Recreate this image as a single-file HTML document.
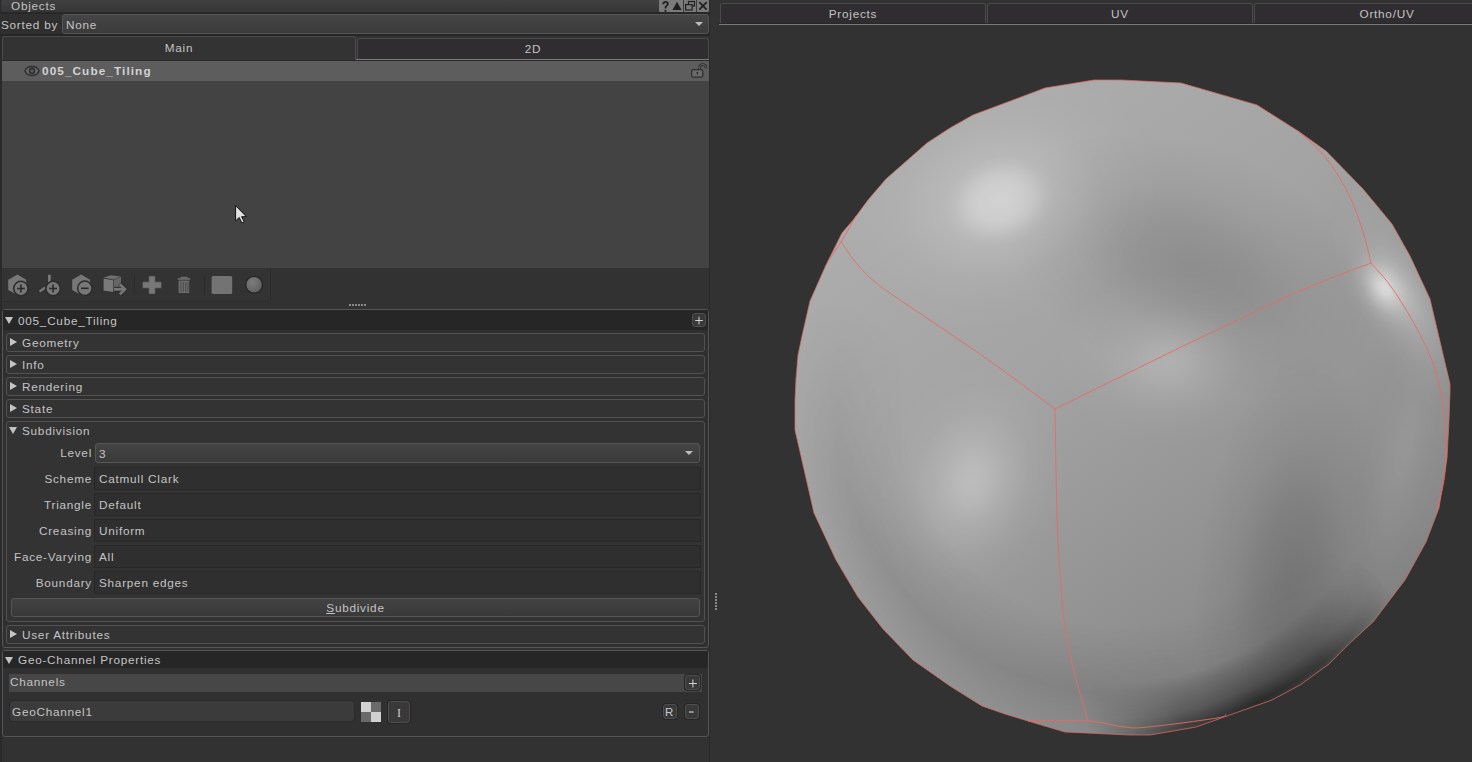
<!DOCTYPE html>
<html><head><meta charset="utf-8">
<style>
*{box-sizing:border-box;margin:0;padding:0}
html,body{width:1472px;height:762px;overflow:hidden;background:#323232}
body{position:relative;font-family:"Liberation Sans",sans-serif;font-size:11.75px;letter-spacing:0.75px;color:#c4c4c4}
.a{position:absolute}
.t{position:absolute;white-space:nowrap;line-height:14px}
.grp{position:absolute;left:6px;width:699px;height:19px;border:1px solid #525252;border-radius:3px;background:#333}
.tri-r{position:absolute;width:0;height:0;border-top:4px solid transparent;border-bottom:4px solid transparent;border-left:7px solid #c4c4c4}
.tri-d{position:absolute;width:0;height:0;border-left:4px solid transparent;border-right:4px solid transparent;border-top:7px solid #c4c4c4}
.fld{position:absolute;left:94px;width:607px;height:23px;background:#2f2f2f;border:1px solid #272727;border-radius:1px}
.lbl{position:absolute;right:1380px;text-align:right}
.btn{position:absolute;border:1px solid #4e4e4e;border-radius:3px;background:#393939;box-shadow:0 0 0 1px #262626}
</style></head><body>

<!-- left strip -->
<div class="a" style="left:0;top:0;width:2px;height:762px;background:#2a2a2a"></div>
<!-- title bar -->
<div class="a" style="left:1px;top:0;width:708px;height:12px;background:linear-gradient(#404040,#363636);border-radius:2px 0 0 0"></div>
<div class="a" style="left:0;top:12px;width:710px;height:2px;background:#282828"></div>
<div class="t" style="left:11px;top:-1px">Objects</div>
<div class="a" style="left:659px;top:0;width:50px;height:12px;background:#7a7a7a;border-radius:0 0 2px 2px"></div>

<!-- sorted by -->
<div class="a" style="left:0;top:14px;width:710px;height:22px;background:#2f2f2f"></div>
<div class="t" style="left:1px;top:18px">Sorted by</div>
<div class="a" style="left:62px;top:14px;width:647px;height:20px;border:1px solid #555;border-radius:3px;background:linear-gradient(#454545,#3b3b3b)"></div>
<div class="t" style="left:66px;top:18px">None</div>
<div class="a" style="left:695px;top:22px;width:0;height:0;border-left:4px solid transparent;border-right:4px solid transparent;border-top:4px solid #bdbdbd"></div>
<div class="a" style="left:0;top:34px;width:710px;height:2px;background:#262626"></div>

<!-- tabs -->
<div class="a" style="left:2px;top:36px;width:354px;height:25px;border:1px solid #4a4a4a;border-bottom:none;border-radius:3px 3px 0 0;background:#333"></div>
<div class="t" style="left:2px;top:41px;width:354px;text-align:center">Main</div>
<div class="a" style="left:357px;top:38px;width:352px;height:22px;border:1px solid #4a4a4a;border-bottom:none;border-radius:3px 3px 0 0;background:#2f2d2f"></div>
<div class="t" style="left:357px;top:42px;width:352px;text-align:center">2D</div>
<div class="a" style="left:356px;top:59px;width:354px;height:1px;background:#7a7a7a"></div>

<!-- object list -->
<div class="a" style="left:2px;top:60px;width:707px;height:208px;background:#434343"></div>
<div class="a" style="left:2px;top:60px;width:707px;height:1px;background:#282828"></div>
<div class="a" style="left:2px;top:61px;width:707px;height:20px;background:#5d5d5d"></div>
<div class="t" style="left:42px;top:64px;font-weight:bold;color:#d2d2d2;letter-spacing:1.1px">005_Cube_Tiling</div>

<!-- toolbar -->
<div class="a" style="left:2px;top:268px;width:269px;height:34px;background:#333;border-right:1px solid #2c2c2c;border-bottom:1px solid #2c2c2c"></div>

<!-- splitter dots -->
<div class="a" style="left:349px;top:304px;width:18px;height:2px;background:repeating-linear-gradient(90deg,#8a8a8a 0 2px,transparent 2px 3px)"></div>

<!-- properties frame -->
<div class="a" style="left:2px;top:309px;width:707px;height:339px;border:1px solid #555;border-radius:3px;background:#303030"></div>
<div class="a" style="left:3px;top:310px;width:705px;height:20px;background:#262626"></div>
<div class="tri-d" style="left:5px;top:317px"></div>
<div class="t" style="left:18px;top:314px">005_Cube_Tiling</div>
<div class="btn" style="left:692px;top:313px;width:14px;height:14px"></div>

<div class="grp" style="top:333px"></div>
<div class="tri-r" style="left:10px;top:338px"></div>
<div class="t" style="left:22px;top:336px">Geometry</div>
<div class="grp" style="top:355px"></div>
<div class="tri-r" style="left:10px;top:360px"></div>
<div class="t" style="left:22px;top:358px">Info</div>
<div class="grp" style="top:377px"></div>
<div class="tri-r" style="left:10px;top:382px"></div>
<div class="t" style="left:22px;top:380px">Rendering</div>
<div class="grp" style="top:399px"></div>
<div class="tri-r" style="left:10px;top:404px"></div>
<div class="t" style="left:22px;top:402px">State</div>

<div class="grp" style="top:421px;height:201px"></div>
<div class="tri-d" style="left:9px;top:427px"></div>
<div class="t" style="left:22px;top:424px">Subdivision</div>

<div class="a" style="left:95px;top:443px;width:605px;height:20px;border:1px solid #555;border-radius:3px;background:linear-gradient(#444,#3a3a3a)"></div>
<div class="t" style="left:99px;top:447px">3</div>
<div class="lbl t" style="top:446px">Level</div>
<div class="a" style="left:685px;top:451px;width:0;height:0;border-left:4px solid transparent;border-right:4px solid transparent;border-top:4px solid #bdbdbd"></div>

<div class="fld" style="top:467px"></div><div class="t" style="left:99px;top:472px">Catmull Clark</div><div class="lbl t" style="top:472px">Scheme</div>
<div class="fld" style="top:493px"></div><div class="t" style="left:99px;top:498px">Default</div><div class="lbl t" style="top:498px">Triangle</div>
<div class="fld" style="top:519px"></div><div class="t" style="left:99px;top:524px">Uniform</div><div class="lbl t" style="top:524px">Creasing</div>
<div class="fld" style="top:545px"></div><div class="t" style="left:99px;top:550px">All</div><div class="lbl t" style="top:550px">Face-Varying</div>
<div class="fld" style="top:571px"></div><div class="t" style="left:99px;top:576px">Sharpen edges</div><div class="lbl t" style="top:576px">Boundary</div>

<div class="a" style="left:11px;top:598px;width:689px;height:19px;border:1px solid #555;border-radius:3px;background:linear-gradient(#424242,#393939)"></div>
<div class="t" style="left:11px;top:601px;width:689px;text-align:center"><u>S</u>ubdivide</div>

<div class="grp" style="top:625px"></div>
<div class="tri-r" style="left:10px;top:630px"></div>
<div class="t" style="left:22px;top:628px">User Attributes</div>

<!-- geo channel frame -->
<div class="a" style="left:2px;top:650px;width:707px;height:87px;border:1px solid #555;border-radius:3px;background:#303030"></div>
<div class="a" style="left:3px;top:651px;width:705px;height:17px;background:#262626"></div>
<div class="tri-d" style="left:5px;top:657px"></div>
<div class="t" style="left:18px;top:653px">Geo-Channel Properties</div>
<div class="a" style="left:9px;top:674px;width:693px;height:18px;background:#474747"></div>
<div class="t" style="left:10px;top:675px">Channels</div>
<div class="btn" style="left:685px;top:675px;width:15px;height:15px"></div>
<div class="a" style="left:10px;top:701px;width:344px;height:20px;background:#3b3b3b;border-radius:3px;box-shadow:0 0 0 1px #2a2a2a"></div>
<div class="t" style="left:12px;top:705px">GeoChannel1</div>
<div class="a" style="left:361px;top:702px;width:20px;height:20px;background:conic-gradient(#6a6a6a 0 90deg,#d0d0d0 90deg 180deg,#6a6a6a 180deg 270deg,#d0d0d0 270deg 360deg)"></div>
<div class="btn" style="left:388px;top:701px;width:22px;height:22px"></div>
<div class="btn" style="left:663px;top:704px;width:14px;height:15px"></div>
<div class="btn" style="left:685px;top:704px;width:14px;height:15px"></div>

<!-- vertical splitter strip -->
<div class="a" style="left:709px;top:0;width:1px;height:762px;background:#2a2a2a"></div>
<div class="a" style="left:715px;top:593px;width:2px;height:18px;background:repeating-linear-gradient(180deg,#8a8a8a 0 2px,transparent 2px 3px)"></div>

<!-- viewport tabs -->
<div class="a" style="left:720px;top:3px;width:266px;height:20px;border:1px solid #4a4a4a;border-bottom:none;border-radius:3px 3px 0 0;background:#2f2d2f"></div>
<div class="t" style="left:720px;top:7px;width:266px;text-align:center">Projects</div>
<div class="a" style="left:987px;top:3px;width:266px;height:20px;border:1px solid #4a4a4a;border-bottom:none;border-radius:3px 3px 0 0;background:#2f2d2f"></div>
<div class="t" style="left:987px;top:7px;width:266px;text-align:center">UV</div>
<div class="a" style="left:1254px;top:3px;width:266px;height:20px;border:1px solid #4a4a4a;border-bottom:none;border-radius:3px 3px 0 0;background:#2f2d2f"></div>
<div class="t" style="left:1254px;top:7px;width:266px;text-align:center">Ortho/UV</div>
<div class="a" style="left:719px;top:23px;width:753px;height:1px;background:#282828"></div>
<div class="a" style="left:719px;top:24px;width:753px;height:1px;background:#7a7a7a"></div>

<!-- ICONS -->
<svg class="a" style="left:0;top:0" width="712" height="762" viewBox="0 0 712 762">
<!-- title buttons -->
<rect x="659" y="0" width="50" height="12" rx="2" fill="#7b7b7b"/>
<rect x="683" y="0" width="1" height="12" fill="#3c3c3c"/>
<rect x="696" y="0" width="1" height="12" fill="#3c3c3c"/>
<path d="M662.3 4.2 C662.3 1.8 664.2 1 665.6 1 C667.3 1 668.8 2 668.8 3.8 C668.8 5.6 666.6 6 666.4 7.8 L666.4 8.6 L664.6 8.6 L664.6 7.6 C664.6 5.4 666.8 5 666.8 3.9 C666.8 3.1 666.3 2.7 665.6 2.7 C664.8 2.7 664.3 3.3 664.3 4.2 Z M664.5 10 H666.5 V11.8 H664.5 Z" fill="#202020"/>
<path d="M677 1.8 L681.6 10 L672.4 10 Z" fill="#202020"/>
<rect x="688.5" y="1.5" width="6" height="4.5" fill="none" stroke="#202020" stroke-width="1.2"/>
<rect x="685.6" y="4.6" width="6.5" height="5.4" fill="#7b7b7b" stroke="#202020" stroke-width="1.2"/>
<path d="M699.3 2.2 L706.7 9.6 M706.7 2.2 L699.3 9.6" stroke="#202020" stroke-width="1.7"/>
<!-- eye -->
<path d="M24.8 71 C27.4 65 36.6 65 39.2 71 C36.6 77 27.4 77 24.8 71 Z" fill="#686868" stroke="#2c2c2c" stroke-width="1.3"/>
<circle cx="32" cy="71" r="2.5" fill="#5a5a5a" stroke="#2c2c2c" stroke-width="1.4"/>
<!-- lock -->
<path d="M699.6 69.6 V67.8 C699.6 65.6 701 64.6 702.8 64.6 C704.6 64.6 706 65.6 706 67.8 V68.6" fill="none" stroke="#2e2e2e" stroke-width="2.6"/>
<path d="M699.6 69.6 V67.8 C699.6 65.6 701 64.6 702.8 64.6 C704.6 64.6 706 65.6 706 67.8 V68.6" fill="none" stroke="#6c6c6c" stroke-width="1"/>
<rect x="691.6" y="69.6" width="11.2" height="7.6" rx="1.8" fill="#6a6a6a" stroke="#2e2e2e" stroke-width="1.2"/>
<path d="M696.2 72 H698.4 L697.3 75.2 Z" fill="#2e2e2e"/>
<!-- toolbar -->
<g fill="#777">
<path d="M17.4 274.6 L26.2 279.8 L26.2 290 L17.4 295 L8.2 290 L8.2 279.8 Z"/>
<rect x="48" y="274.8" width="2.8" height="7.2"/>
<path d="M39 290.6 L44.6 286.6 L45.8 288.6 L40.2 292.4 Z"/>
<path d="M81.2 274.6 L90 279.8 L90 290 L81.2 295 L72.2 290 L72.2 279.8 Z"/>
</g>
<g fill="#777" stroke="#2c2c2c" stroke-width="1.5">
<circle cx="20.9" cy="288.5" r="7.2"/>
<circle cx="53.1" cy="288.5" r="7.2"/>
<circle cx="84.8" cy="288.3" r="7.2"/>
</g>
<g stroke="#2a2a2a" stroke-width="1.6">
<path d="M17 288.5 H24.8 M20.9 284.6 V292.4"/>
<path d="M49.2 288.5 H57 M53.1 284.6 V292.4"/>
<path d="M81 288.3 H88.6"/>
</g>
<!-- cube with arrow -->
<path d="M103.6 278.6 L113.2 280.2 L113.2 292 L103.6 290.4 Z" fill="#7a7a7a"/>
<path d="M103.6 277.4 L110.8 275.2 L120.6 276.6 L113.2 279.6 Z" fill="#707070"/>
<path d="M113.8 279.8 L121 276.8 L121 288.6 L113.8 291.6 Z" fill="#666"/>
<path d="M114 289.3 H124" stroke="#2e2e2e" stroke-width="5"/>
<path d="M119.8 283.6 L125.6 289.3 L119.8 295" fill="none" stroke="#2e2e2e" stroke-width="4.4"/>
<path d="M114 289.3 H124.4" stroke="#777" stroke-width="2.8"/>
<path d="M119.8 284.2 L125 289.3 L119.8 294.4" fill="none" stroke="#777" stroke-width="2.6"/>
<rect x="134" y="276" width="1" height="19" fill="#2a2a2a"/>
<rect x="204" y="276" width="1" height="19" fill="#2a2a2a"/>
<!-- plus -->
<path d="M149.2 276.4 H154.8 V282.2 H161 V287.8 H154.8 V293.6 H149.2 V287.8 H143 V282.2 H149.2 Z" fill="#777" stroke="#777" stroke-width="0.6" stroke-linejoin="round"/>
<!-- trash -->
<g fill="#6e6e6e">
<rect x="180.6" y="276.8" width="7" height="1.4"/>
<rect x="177.8" y="278.2" width="12.2" height="1.6"/>
<path d="M178.6 280.6 H189.2 V293 H178.6 Z"/>
</g>
<g fill="#4a4a4a">
<rect x="180.4" y="282" width="1" height="10"/><rect x="182.8" y="282" width="1" height="10"/><rect x="185.2" y="282" width="1" height="10"/><rect x="187.4" y="282" width="1" height="10"/>
</g>
<rect x="211.6" y="276" width="20.6" height="18" rx="1.5" fill="#737373"/>
<radialGradient id="tbc" cx="0.4" cy="0.35" r="0.7"><stop offset="0" stop-color="#7c7c7c"/><stop offset="1" stop-color="#5e5e5e"/></radialGradient><circle cx="254.1" cy="284.8" r="8.4" fill="url(#tbc)" stroke="#262626" stroke-width="1.4"/>
<!-- cursor -->
<path d="M235.6 205.6 L235.6 220.9 L239.2 217.5 L241.9 222.9 L244.2 221.8 L241.6 216.7 L246.4 216.7 Z" fill="#e2e2e2" stroke="#111" stroke-width="1" stroke-linejoin="miter"/>
<!-- + buttons glyphs -->
<path d="M695.2 320.5 H702.8 M699 316.7 V324.3" stroke="#d4d4d4" stroke-width="1"/>
<path d="M688.9 683.5 H696.9 M692.9 679.5 V687.5" stroke="#d4d4d4" stroke-width="1"/>
<path d="M689 712 H693.6" stroke="#cfcfcf" stroke-width="1.2"/>
</svg>
<div class="t" style="left:665px;top:705px;font-size:11.5px;color:#c8c8c8">R</div>
<div class="t" style="left:388px;top:706px;width:22px;text-align:center;font-family:'Liberation Serif',serif;font-size:12px;color:#d0d0d0;letter-spacing:0">I</div>

<!-- SPHERE -->
<svg class="a" style="left:0;top:0" width="1472" height="762" viewBox="0 0 1472 762">
<defs>
<clipPath id="cp"><polygon points="1094,80 1121,80 1181,83 1257,105 1298,131 1326,151 1363,189 1392,224 1410,256 1430,299 1450,384 1450,392 1449,420 1447,458 1439,508 1426,542 1405,580 1373,622 1350,643 1329,664 1300,685 1272,700 1196,727 1150,735 1130,735 1065,732 1028,721 1005,714 982,706 950,686 913,660 883,629 858,597 836,560 814,513 803,465 795,430 795,400 796,379 798,355 802,336 810,301 826,265 842,233 854,219 868,200 886,179 927,143 950,128 973,115 1045,88"/></clipPath>
<linearGradient id="base" gradientUnits="userSpaceOnUse" x1="930" y1="170" x2="1330" y2="700">
<stop offset="0" stop-color="#acacac"/><stop offset="0.35" stop-color="#a3a3a3"/><stop offset="0.6" stop-color="#979797"/><stop offset="0.85" stop-color="#8a8a8a"/><stop offset="1" stop-color="#7c7c7c"/>
</linearGradient>
<radialGradient id="hl" r="0.5"><stop offset="0" stop-color="#fff" stop-opacity="0.6"/><stop offset="0.15" stop-color="#fff" stop-opacity="0.52"/><stop offset="0.35" stop-color="#fff" stop-opacity="0.3"/><stop offset="0.6" stop-color="#fff" stop-opacity="0.1"/><stop offset="0.8" stop-color="#fff" stop-opacity="0.03"/><stop offset="1" stop-color="#fff" stop-opacity="0"/></radialGradient>
<radialGradient id="dk" r="0.5"><stop offset="0" stop-color="#000" stop-opacity="0.6"/><stop offset="0.3" stop-color="#000" stop-opacity="0.45"/><stop offset="0.6" stop-color="#000" stop-opacity="0.18"/><stop offset="1" stop-color="#000" stop-opacity="0"/></radialGradient>
<radialGradient id="crescent" gradientUnits="userSpaceOnUse" cx="1110" cy="390" r="350">
<stop offset="0" stop-color="#000" stop-opacity="0"/><stop offset="0.84" stop-color="#000" stop-opacity="0"/><stop offset="0.94" stop-color="#000" stop-opacity="0.35"/><stop offset="0.985" stop-color="#000" stop-opacity="0.65"/><stop offset="1" stop-color="#000" stop-opacity="0.6"/>
</radialGradient>
<radialGradient id="cmask" gradientUnits="userSpaceOnUse" cx="1255" cy="695" r="170">
<stop offset="0" stop-color="#fff"/><stop offset="0.45" stop-color="#fff" stop-opacity="0.8"/><stop offset="1" stop-color="#fff" stop-opacity="0"/>
</radialGradient>
<mask id="cm"><rect x="780" y="70" width="690" height="680" fill="url(#cmask)"/></mask>
<radialGradient id="ring" gradientUnits="userSpaceOnUse" cx="1122" cy="410" r="330">
<stop offset="0" stop-color="#000" stop-opacity="0"/><stop offset="0.66" stop-color="#000" stop-opacity="0"/><stop offset="0.86" stop-color="#000" stop-opacity="0.09"/><stop offset="0.97" stop-color="#000" stop-opacity="0.02"/><stop offset="1" stop-color="#000" stop-opacity="0"/>
</radialGradient>
<linearGradient id="rmaskg" gradientUnits="userSpaceOnUse" x1="840" y1="700" x2="1000" y2="380">
<stop offset="0" stop-color="#fff"/><stop offset="0.45" stop-color="#fff"/><stop offset="1" stop-color="#fff" stop-opacity="0"/>
</linearGradient>
<mask id="rm"><rect x="780" y="70" width="690" height="680" fill="url(#rmaskg)"/></mask>
<radialGradient id="hlp" r="0.5"><stop offset="0" stop-color="#fff" stop-opacity="0.5"/><stop offset="0.4" stop-color="#fff" stop-opacity="0.45"/><stop offset="0.62" stop-color="#fff" stop-opacity="0.3"/><stop offset="0.82" stop-color="#fff" stop-opacity="0.1"/><stop offset="1" stop-color="#fff" stop-opacity="0"/></radialGradient>
<radialGradient id="ring2" gradientUnits="userSpaceOnUse" cx="1110" cy="400" r="340">
<stop offset="0" stop-color="#000" stop-opacity="0"/><stop offset="0.55" stop-color="#000" stop-opacity="0"/><stop offset="0.8" stop-color="#000" stop-opacity="0.16"/><stop offset="0.93" stop-color="#000" stop-opacity="0.08"/><stop offset="1" stop-color="#000" stop-opacity="0"/>
</radialGradient>
<linearGradient id="r2mg" gradientUnits="userSpaceOnUse" x1="1150" y1="470" x2="1400" y2="520">
<stop offset="0" stop-color="#fff" stop-opacity="0"/><stop offset="0.5" stop-color="#fff" stop-opacity="1"/><stop offset="1" stop-color="#fff" stop-opacity="1"/>
</linearGradient>
<mask id="r2m"><rect x="780" y="70" width="690" height="680" fill="url(#r2mg)"/></mask>
</defs>
<g clip-path="url(#cp)">
<rect x="780" y="70" width="690" height="680" fill="url(#base)"/>
<rect x="780" y="70" width="690" height="680" fill="url(#ring)" mask="url(#rm)"/>
<ellipse cx="1290" cy="580" rx="95" ry="230" fill="url(#dk)" opacity="0.26" transform="rotate(6 1290 580)"/>
<ellipse cx="1405" cy="450" rx="45" ry="150" fill="url(#hl)" opacity="0.12" transform="rotate(12 1405 450)"/>
<ellipse cx="1190" cy="265" rx="200" ry="120" fill="url(#dk)" opacity="0.22" transform="rotate(22 1190 265)"/>
<ellipse cx="1000" cy="201" rx="170" ry="130" fill="url(#hl)" opacity="0.5" transform="rotate(-18 1000 201)"/>
<ellipse cx="1000" cy="201" rx="56" ry="44" fill="url(#hlp)" opacity="0.5" transform="rotate(-18 1000 201)"/>
<ellipse cx="972" cy="482" rx="95" ry="125" fill="url(#hl)" opacity="0.5" transform="rotate(15 972 482)"/>
<ellipse cx="1170" cy="360" rx="120" ry="90" fill="url(#hl)" opacity="0.35"/>
<ellipse cx="1384" cy="288" rx="34" ry="50" fill="url(#hl)" opacity="0.95" transform="rotate(-30 1384 288)"/>
<ellipse cx="1405" cy="300" rx="55" ry="130" fill="url(#hl)" opacity="0.42" transform="rotate(-28 1405 300)"/>
<rect x="780" y="70" width="690" height="680" fill="url(#crescent)" mask="url(#cm)"/>
</g>
<polygon points="1094,80 1121,80 1181,83 1257,105 1298,131 1326,151 1363,189 1392,224 1410,256 1430,299 1450,384 1450,392 1449,420 1447,458 1439,508 1426,542 1405,580 1373,622 1350,643 1329,664 1300,685 1272,700 1196,727 1150,735 1130,735 1065,732 1028,721 1005,714 982,706 950,686 913,660 883,629 858,597 836,560 814,513 803,465 795,430 795,400 796,379 798,355 802,336 810,301 826,265 842,233 854,219 868,200 886,179 927,143 950,128 973,115 1045,88" fill="none" stroke="#d86a64" stroke-width="1" opacity="0.75"/>
<g fill="none" stroke="#e46c66" stroke-width="1" stroke-linejoin="round" opacity="0.9">
<path d="M1055,409 C1043.7,400.7 1012.8,377.2 987,359 C961.2,340.8 918.7,312.8 900,300 C881.3,287.2 882.2,288.0 875,282 C867.8,276.0 862.7,270.7 857,264 C851.3,257.3 843.7,245.7 841,242"/>
<path d="M841,242 L856,216"/>
<path d="M841,242 L829,260"/>
<path d="M1055,409 C1065.8,403.7 1095.8,388.8 1120,377 C1144.2,365.2 1170.0,352.3 1200,338 C1230.0,323.7 1271.5,303.5 1300,291 C1328.5,278.5 1359.2,267.7 1371,263"/>
<path d="M1371,263 C1369.7,257.8 1366.7,243.3 1363,232 C1359.3,220.7 1355.2,207.3 1349,195 C1342.8,182.7 1334.5,168.7 1326,158 C1317.5,147.3 1302.7,135.5 1298,131"/>
<path d="M1371,263 C1374.5,267.2 1384.5,277.3 1392,288 C1399.5,298.7 1409.0,314.0 1416,327 C1423.0,340.0 1429.5,352.8 1434,366 C1438.5,379.2 1441.0,392.0 1443,406 C1445.0,420.0 1445.8,437.7 1446,450 C1446.2,462.3 1445.5,470.0 1444,480 C1442.5,490.0 1438.2,505.0 1437,510"/>
<path d="M1055,409 C1055.2,419.2 1055.5,448.2 1056,470 C1056.5,491.8 1056.7,515.2 1058,540 C1059.3,564.8 1061.3,597.2 1064,619 C1066.7,640.8 1070.0,654.0 1074,671 C1078.0,688.0 1085.7,712.7 1088,721"/>
<path d="M1028,721 C1038.0,721.0 1072.0,720.0 1088,721 C1104.0,722.0 1114.0,726.0 1124,727 C1134.0,728.0 1132.5,728.5 1148,727 C1163.5,725.5 1204.0,720.2 1217,718 C1230.0,715.8 1224.5,714.7 1226,714"/>
</g>
</svg>
</body></html>
